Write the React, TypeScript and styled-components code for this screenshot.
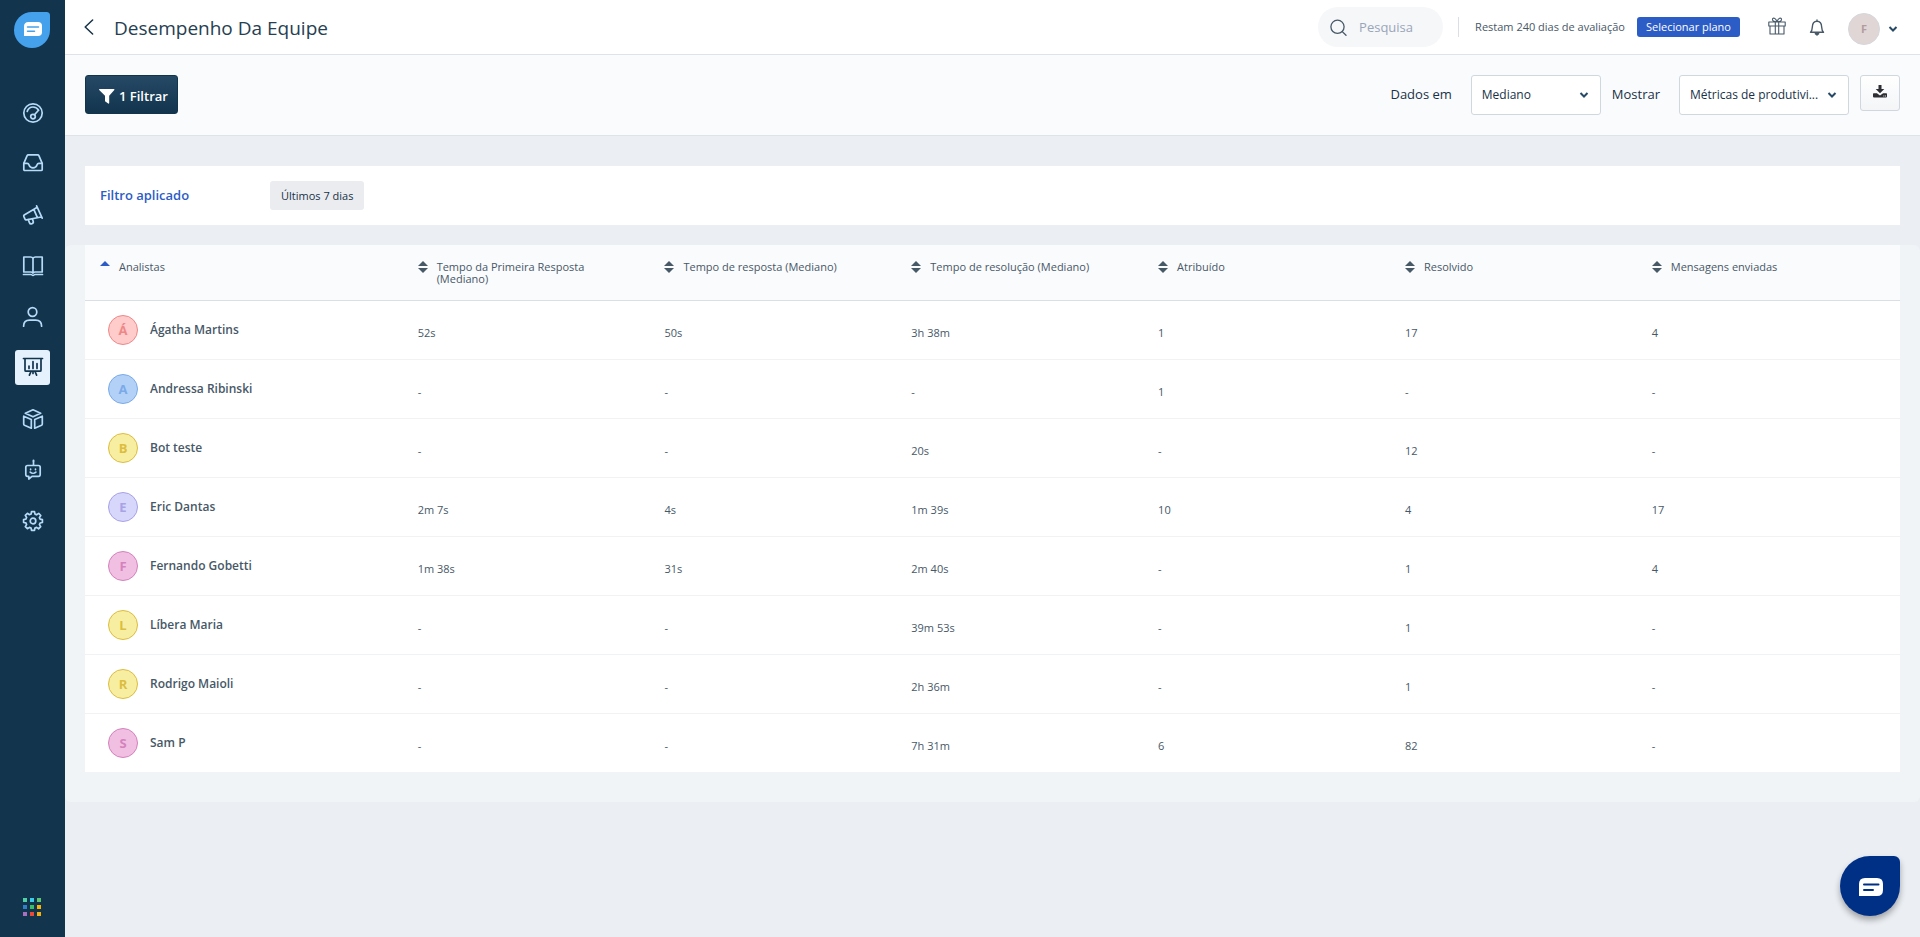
import React from "react";
import styled, { createGlobalStyle, css } from "styled-components";

const GlobalStyle = createGlobalStyle`
  *, *::before, *::after { box-sizing: border-box; }
  html, body, #root { height: 100%; }
  body {
    margin: 0;
    background: #ebeef3;
    color: #183247;
    font-family: "Segoe UI", "Open Sans", "Noto Sans", sans-serif;
    font-size: 12px;
    line-height: 16px;
  }
  button, input, select { font: inherit; color: inherit; margin: 0; }
  button { cursor: pointer; }
`;

/* ---------- layout ---------- */

const Shell = styled.div`
  display: flex;
  min-height: 100%;
`;

const Sidebar = styled.nav`
  flex: 0 0 65px;
  display: flex;
  flex-direction: column;
  align-items: center;
  padding: 12px 2px 21px 0;
  background: #12344d;
  color: #b6daf7;
`;

const LogoLink = styled.a`
  display: flex;
  width: 36px;
  height: 36px;
`;

const NavList = styled.ul`
  flex: 1;
  display: flex;
  flex-direction: column;
  gap: 16px;
  margin: 0;
  padding: 47px 0 0 2px;
  list-style: none;
`;

const NavLink = styled.a<{ $active?: boolean }>`
  display: flex;
  align-items: center;
  justify-content: center;
  width: 35px;
  height: 35px;
  border-radius: 3px;
  color: inherit;
  ${(p) => p.$active && css`
    background: #e5f2fd;
    color: #12344d;
  `}
`;

const BareButton = styled.button`
  display: flex;
  align-items: center;
  justify-content: center;
  padding: 0;
  border: 0;
  background: none;
`;

const Page = styled.div`
  flex: 1;
  min-width: 0;
`;

/* ---------- top bar ---------- */

const TopBar = styled.header`
  display: flex;
  align-items: center;
  height: 55px;
  padding: 0 22px 0 19px;
  background: #fff;
  border-bottom: 1px solid #dfe2e7;
`;

const Title = styled.h1`
  flex: 1;
  margin: 0 0 0 20px;
  padding-top: 2px;
  font-size: 19px;
  font-weight: 400;
  line-height: 28px;
  color: #264052;
`;

const SearchBox = styled.label`
  display: flex;
  align-items: center;
  gap: 12px;
  width: 125px;
  height: 40px;
  padding: 0 12px;
  border-radius: 20px;
  background: #f5f7f9;
  color: #475867;
`;

const SearchInput = styled.input`
  min-width: 0;
  width: 100%;
  padding: 0;
  border: 0;
  outline: 0;
  background: none;
  font-size: 13px;
  &::placeholder { color: #9aa5b8; opacity: 1; }
`;

const Trial = styled.div`
  display: flex;
  align-items: center;
  gap: 12px;
  height: 20px;
  margin-left: 15px;
  padding-left: 16px;
  border-left: 1px solid #dadfe6;
  font-size: 11px;
  color: #475867;
`;

const PlanButton = styled.button`
  height: 20px;
  padding: 0 9px;
  border: 0;
  border-radius: 3px;
  background: #2c5cc5;
  color: #fff;
  font-size: 11px;
  line-height: 20px;
`;

const HeaderIcons = styled.div`
  display: flex;
  align-items: center;
  gap: 23px;
  margin-left: 28px;
  color: #475867;
`;

const ProfileButton = styled(BareButton)`
  gap: 8px;
  padding-top: 3px;
  color: #264966;
`;

const ProfileAvatar = styled.span`
  width: 32px;
  height: 32px;
  border: 1px solid #d6d6dc;
  border-radius: 50%;
  background: #e0d6d6;
  color: #b39c9f;
  font-size: 11px;
  font-weight: 700;
  line-height: 30px;
  text-align: center;
`;

/* ---------- toolbar ---------- */

const Toolbar = styled.div`
  display: flex;
  justify-content: space-between;
  height: 81px;
  padding: 20px;
  background: #fafbfd;
  border-bottom: 1px solid #dfe2e7;
`;

const FilterButton = styled.button`
  display: flex;
  align-items: center;
  gap: 4px;
  height: 39px;
  padding: 3px 9px 0 13px;
  border: 1px solid #12344d;
  border-radius: 3px;
  background: linear-gradient(180deg, #264966, #12344d);
  color: #fff;
  font-size: 13px;
  font-weight: 600;
`;

const Options = styled.div`
  display: flex;
  align-items: flex-start;
`;

const OptionLabel = styled.label`
  margin-left: 11px;
  line-height: 39px;
  font-size: 13px;
`;

const SelectFrame = styled.span<{ $width: number }>`
  display: grid;
  align-items: center;
  width: ${(p) => p.$width}px;
  height: 40px;
  margin-left: 19px;
  border: 1px solid #cfd7df;
  border-radius: 3px;
  background: #fff;
  > * { grid-area: 1 / 1; }
  > svg { justify-self: end; margin-right: 11px; pointer-events: none; }
`;

const Select = styled.select`
  width: 100%;
  height: 38px;
  padding: 0 24px 0 10px;
  border: 0;
  background: none;
  appearance: none;
  font-size: 12px;
`;

const DownloadButton = styled.button`
  display: flex;
  align-items: center;
  justify-content: center;
  width: 40px;
  height: 36px;
  margin-left: 11px;
  padding: 0 0 4px;
  border: 1px solid #cfd7df;
  border-radius: 3px;
  background: linear-gradient(180deg, #fff, #f3f5f7);
  color: #2d2f33;
`;

/* ---------- applied filter ---------- */

const AppliedFilter = styled.section`
  display: flex;
  align-items: center;
  height: 59px;
  margin: 30px 20px 20px;
  padding: 0 15px;
  background: #fff;
`;

const AppliedTitle = styled.h2`
  flex: 0 0 170px;
  margin: 0;
  padding-bottom: 2px;
  font-size: 13px;
  font-weight: 600;
  color: #2c5cc5;
`;

const Chip = styled.span`
  height: 29px;
  padding: 0 11px;
  border-radius: 3px;
  background: #ebecf0;
  font-size: 11px;
  line-height: 29px;
`;

/* ---------- table ---------- */

const TablePanel = styled.section`
  padding: 0 20px 30px;
  border-radius: 6px;
  background: #f0f4f7;
`;

const Table = styled.table`
  width: 100%;
  table-layout: fixed;
  border-collapse: separate;
  border-spacing: 0;
  background: #fff;
  color: #475867;
`;

const FirstCol = styled.col`width: 17.5%;`;
const MetricCol = styled.col`width: 13.6%;`;

const HeadCell = styled.th`
  height: 56px;
  padding: 16px 15px 0;
  border-bottom: 1px solid #dadfe6;
  background: #fafbfd;
  font-weight: 400;
  text-align: left;
  vertical-align: top;
`;

const SortButton = styled.button<{ $active?: boolean }>`
  display: flex;
  align-items: flex-start;
  gap: 9px;
  max-width: 200px;
  padding: 0;
  border: 0;
  background: none;
  font-size: 11px;
  line-height: 12px;
  text-align: left;
  > svg { flex: none; color: ${(p) => (p.$active ? "#2c5cc5" : "#475867")}; }
`;

const BodyRow = styled.tr`
  height: 59px;
  > * { border-bottom: 1px solid #f0f2f4; }
  &:last-child { height: 58px; }
  &:last-child > * { border-bottom: 0; }
`;

const NameCell = styled.th`
  padding: 0 15px 0 23px;
  font-weight: 600;
  text-align: left;
`;

const Person = styled.span`
  display: flex;
  align-items: center;
  gap: 12px;
`;

const Avatar = styled.span<{ $tone: Tone }>`
  width: 30px;
  height: 30px;
  border: 1px solid ${(p) => TONES[p.$tone].line};
  border-radius: 50%;
  background: ${(p) => TONES[p.$tone].fill};
  color: ${(p) => TONES[p.$tone].line};
  font-size: 13px;
  font-weight: 700;
  line-height: 28px;
  text-align: center;
`;

const ValueCell = styled.td`
  padding: 5px 15px 0;
  font-size: 11px;
`;

const ChatButton = styled.button`
  position: fixed;
  right: 20px;
  bottom: 21px;
  display: flex;
  align-items: center;
  justify-content: center;
  width: 60px;
  height: 60px;
  padding: 2px 0 0 2px;
  border: 0;
  border-radius: 30px 6px 30px 30px;
  background: #002f86;
  box-shadow: 0 4px 6px rgba(0, 0, 0, 0.32);
`;

/* ---------- icons ---------- */

const line = { fill: "none", stroke: "currentColor", strokeLinecap: "round", strokeLinejoin: "round" } as const;

const NavIcon = ({ children }: { children: React.ReactNode }) => (
  <svg width="22" height="22" viewBox="0 0 22 22" {...line} strokeWidth="1.7" aria-hidden="true">{children}</svg>
);

const GaugeIcon = () => (
  <NavIcon>
    <circle cx="11" cy="11" r="9.2" />
    <path d="M5.2 9.4C6.2 6.5 8.4 5 11 5c2.400 0 4.400 1.200 5.500 3.200" />
    <circle cx="11" cy="14.600" r="2.300" />
    <path d="M12.500 12.800l4-4.500" />
  </NavIcon>
);
const InboxIcon = () => (
  <NavIcon>
    <path d="M1.800 10.300L5 2.800Q5.400 1.900 6.400 1.900h9.200q1 0 1.400.9l3.200 7.500v6.200q0 1-1 1H2.800q-1 0-1-1z" />
    <path d="M1.800 10.300h3.400c1.400 0 1.500.8 1.900 1.900.6 1.600 2 2.600 3.900 2.600s3.300-1 3.900-2.600c.4-1.100.5-1.900 1.900-1.900h3.400" />
  </NavIcon>
);
const MegaphoneIcon = () => (
  <NavIcon>
    <path d="M14.600 1.800l5.600 12.400M14.900 3.500L2.200 11c-.5.400-.6.900-.4 1.400l1.300 2.900c.2.500.7.700 1.200.6l14.900-2.900M11.800 5.400l3.600 8.200" />
    <path d="M6.300 15.700l1.100 2.900c.4 1.100 1.400 1.500 2.500 1.100 1.100-.4 1.700-1.300 1.300-2.400l-.9-2.400" />
  </NavIcon>
);
const BookIcon = () => (
  <NavIcon>
    <path d="M11 3.200C10.400 2.200 9.600 2 8.600 2H1.800v15h7c1 0 1.800.2 2.200 1 .4-.8 1.200-1 2.200-1h7V2h-6.800c-1 0-1.800.2-2.400 1.200zM11 3.200V18M1.500 19.500h7.700c.8 0 .9 1 1.800 1s1-1 1.800-1h7.700" />
  </NavIcon>
);
const UserIcon = () => (
  <NavIcon>
    <circle cx="10.500" cy="6" r="4.300" />
    <path d="M1.600 20.200c0-4.200 2.500-6 6-6h6c3.500 0 6 1.800 6 6" />
  </NavIcon>
);
const ReportIcon = () => (
  <NavIcon>
    <path d="M1.500 1.500h19M3 1.500v11.700q0 1 1 1h14q1 0 1-1V1.500M9 14.500l-1.600 3.700M13 14.500l1.600 3.700M11 15v1.500" />
    <path d="M7 11.500v-2.500M11 11.500V4.500M15 11.500V6.500" />
  </NavIcon>
);
const BoxesIcon = () => (
  <NavIcon>
    <path d="M11 1.800l7.700 3.500L11 8.800 3.300 5.300z" />
    <path d="M1.700 8.200l7.600 3.300v8.700l-6.800-3q-.8-.4-.8-1.300zM20.300 8.200l-7.600 3.300v8.700l6.800-3q.8-.4.8-1.300z" />
  </NavIcon>
);
const BotIcon = () => (
  <NavIcon>
    <path d="M5.500 6.500h11q1.700 0 1.700 1.700v7.400q0 1.700-1.700 1.700H10l-3.200 2.700v-2.700H5.500q-1.700 0-1.700-1.700V8.200q0-1.700 1.700-1.700zM11.500 6.500V2.500" />
    <path d="M11.500 1.600v.4" strokeWidth="2" />
    <path d="M8.600 10.200v.4M13.500 10.200v.4M8.200 13.200c1.500 1.400 4.200 1.400 5.700 0" />
  </NavIcon>
);
const GearIcon = () => (
  <NavIcon>
    <circle cx="11" cy="11" r="2.800" />
    <path d="M9.500 1.700h3l.5 2.400 1.600.7 2.100-1.400 2.100 2.100-1.400 2.100.7 1.600 2.300.4v2.900l-2.300.5-.7 1.600 1.300 2.100-2.100 2.100-2-1.400-1.700.7-.4 2.300h-3l-.4-2.300-1.700-.7-2 1.300-2.100-2.100 1.300-2-.7-1.700-2.300-.4v-3l2.300-.4.7-1.600-1.300-2.100 2.100-2.100 2 1.400 1.700-.7z" />
  </NavIcon>
);

const Logo = () => (
  <svg width="36" height="36" viewBox="0 0 36 36" aria-hidden="true">
    <path d="M18 0h14.500Q36 0 36 3.500V18A18 18 0 1 1 18 0z" fill="#45a1ec" />
    <path d="M14.500 10H24q4 0 4 4v6q0 4-4 4H10v-9.500q0-4.500 4.500-4.500z" fill="#fff" />
    <path d="M13.500 15h11M13.500 19.300h7" stroke="#45a1ec" strokeWidth="1.500" strokeLinecap="round" />
  </svg>
);

const APP_COLOURS = ["#4fd1a5", "#3ecbe8", "#5cc773", "#2f80c8", "#35c163", "#f8b500", "#ab6fc0", "#e84b3c", "#f5b012"];
const AppsIcon = () => (
  <svg width="18" height="18" viewBox="0 0 18 18" aria-hidden="true">
    {APP_COLOURS.map((c, i) => (
      <rect key={c} x={(i % 3) * 7} y={Math.floor(i / 3) * 7} width="4" height="4" fill={c} />
    ))}
  </svg>
);

const BackIcon = () => (
  <svg width="10" height="16" viewBox="0 0 10 16" {...line} strokeWidth="1.500" aria-hidden="true"><path d="M8.600 1L1.200 8l7.400 7" /></svg>
);
const SearchGlyph = styled.svg`
  flex: none;
`;
const SearchIcon = () => (
  <SearchGlyph width="17" height="17" viewBox="0 0 17 17" {...line} strokeWidth="1.300" aria-hidden="true">
    <circle cx="7.500" cy="7.800" r="6.600" /><path d="M12.300 12.600l3.700 3.600" />
  </SearchGlyph>
);
const GiftIcon = () => (
  <svg width="18" height="20" viewBox="0 0 18 20" {...line} strokeWidth="1.100" aria-hidden="true">
    <path d="M.8 5h16.400v4H.8zM2 9h14v8H2zM7.300 5v12M10.700 5v12M8.600 4.800C5.500 4.600 4.200 3.600 4.500 2.200 4.800.6 7.800.4 8.800 4.500M9.400 4.800c3.100-.2 4.400-1.200 4.100-2.600C13.200.6 10.200.4 9.200 4.500" />
  </svg>
);
const BellIcon = () => (
  <svg width="16" height="18" viewBox="0 0 16 18" {...line} strokeWidth="1.400" aria-hidden="true">
    <path d="M1.500 14.200c1.500-1.200 1.700-2.700 1.800-5C3.400 5.500 5 3.300 8 3.300s4.600 2.200 4.700 5.900c.1 2.300.3 3.800 1.800 5zM8 3.200V2" />
    <path d="M6.300 15.600h3.400L8 17z" fill="currentColor" />
  </svg>
);
const Chevron = () => (
  <svg width="10" height="8" viewBox="0 0 10 8" fill="none" stroke="#264966" strokeWidth="2" aria-hidden="true"><path d="M1.500 2L5 5.500 8.500 2" /></svg>
);
const FunnelIcon = () => (
  <svg width="16" height="15" viewBox="0 0 16 15" fill="currentColor" aria-hidden="true">
    <path d="M.6 0h14.300q.8.400.4 1.100L10.200 6.700v7.400q-.3.800-1 .4L6 12.200V6.700L.2 1.100Q-.2.400.6 0z" />
  </svg>
);
const DownloadIcon = () => (
  <svg width="14" height="13" viewBox="0 0 14 13" fill="currentColor" aria-hidden="true">
    <path d="M5.500 0h3v4h2.800L7 8.300 2.700 4h2.800z" />
    <path d="M.7 8.300h3.200L7 10.600l3.100-2.300h3.200q.7 0 .7.700v2.600q0 .8-.7.800H.7q-.7 0-.7-.8V9q0-.7.7-.7zM10.400 10.600v.9h.9v-.9zm1.600 0v.9h.9v-.9z" fillRule="evenodd" />
  </svg>
);
const SortIcon = ({ active }: { active?: boolean }) => (
  <svg width="10" height="12" viewBox="0 0 10 12" fill="currentColor" aria-hidden="true">
    <path d="M5 0l5 5H0z" />
    {!active && <path d="M5 12l5-5H0z" />}
  </svg>
);
const ChatIcon = () => (
  <svg width="24" height="18" viewBox="0 0 24 18" aria-hidden="true">
    <path d="M6 0h12q6 0 6 6v6q0 6-6 6H0V6q0-6 6-6z" fill="#fff" />
    <path d="M5 6.500h14.500M5 12h9" stroke="#002f86" strokeWidth="2" strokeLinecap="round" />
  </svg>
);

/* ---------- data ---------- */

const TONES = {
  red: { fill: "#ffcbcb", line: "#ee8888" },
  blue: { fill: "#b3d1f7", line: "#7aaae8" },
  yellow: { fill: "#f7eea1", line: "#dcbd3f" },
  violet: { fill: "#d7d6fb", line: "#a8a2e6" },
  pink: { fill: "#f1bfe1", line: "#d482bd" },
};
type Tone = keyof typeof TONES;

const NAV = [
  { label: "Painel", Icon: GaugeIcon },
  { label: "Caixa de entrada", Icon: InboxIcon },
  { label: "Campanhas", Icon: MegaphoneIcon },
  { label: "Perguntas frequentes", Icon: BookIcon },
  { label: "Contatos", Icon: UserIcon },
  { label: "Relatórios", Icon: ReportIcon, active: true },
  { label: "Aplicativos", Icon: BoxesIcon },
  { label: "Bots", Icon: BotIcon },
  { label: "Configurações", Icon: GearIcon },
];

const COLUMNS = [
  "Analistas",
  "Tempo da Primeira Resposta (Mediano)",
  "Tempo de resposta (Mediano)",
  "Tempo de resolução (Mediano)",
  "Atribuído",
  "Resolvido",
  "Mensagens enviadas",
];

const AGENTS: { name: string; tone: Tone; values: string[] }[] = [
  { name: "Ágatha Martins", tone: "red", values: ["52s", "50s", "3h 38m", "1", "17", "4"] },
  { name: "Andressa Ribinski", tone: "blue", values: ["-", "-", "-", "1", "-", "-"] },
  { name: "Bot teste", tone: "yellow", values: ["-", "-", "20s", "-", "12", "-"] },
  { name: "Eric Dantas", tone: "violet", values: ["2m 7s", "4s", "1m 39s", "10", "4", "17"] },
  { name: "Fernando Gobetti", tone: "pink", values: ["1m 38s", "31s", "2m 40s", "-", "1", "4"] },
  { name: "Líbera Maria", tone: "yellow", values: ["-", "-", "39m 53s", "-", "1", "-"] },
  { name: "Rodrigo Maioli", tone: "yellow", values: ["-", "-", "2h 36m", "-", "1", "-"] },
  { name: "Sam P", tone: "pink", values: ["-", "-", "7h 31m", "6", "82", "-"] },
];

export default function App() {
  return (
    <Shell>
      <GlobalStyle />
      <Sidebar aria-label="Principal">
        <LogoLink href="#" aria-label="Início"><Logo /></LogoLink>
        <NavList>
          {NAV.map(({ label, Icon, active }) => (
            <li key={label}>
              <NavLink href="#" $active={active} aria-label={label} aria-current={active ? "page" : undefined}><Icon /></NavLink>
            </li>
          ))}
        </NavList>
        <BareButton aria-label="Trocar de produto"><AppsIcon /></BareButton>
      </Sidebar>

      <Page>
        <TopBar>
          <BareButton aria-label="Voltar"><BackIcon /></BareButton>
          <Title>Desempenho Da Equipe</Title>
          <SearchBox>
            <SearchIcon />
            <SearchInput type="search" placeholder="Pesquisa" aria-label="Pesquisa" />
          </SearchBox>
          <Trial>
            <span>Restam 240 dias de avaliação</span>
            <PlanButton>Selecionar plano</PlanButton>
          </Trial>
          <HeaderIcons>
            <BareButton aria-label="Novidades"><GiftIcon /></BareButton>
            <BareButton aria-label="Notificações"><BellIcon /></BareButton>
            <ProfileButton aria-label="Perfil">
              <ProfileAvatar>F</ProfileAvatar>
              <Chevron />
            </ProfileButton>
          </HeaderIcons>
        </TopBar>

        <Toolbar>
          <FilterButton><FunnelIcon />1 Filtrar</FilterButton>
          <Options>
            <OptionLabel htmlFor="aggregate">Dados em</OptionLabel>
            <SelectFrame $width={130}>
              <Select id="aggregate"><option>Mediano</option></Select>
              <Chevron />
            </SelectFrame>
            <OptionLabel htmlFor="metrics">Mostrar</OptionLabel>
            <SelectFrame $width={170}>
              <Select id="metrics"><option>Métricas de produtivi...</option></Select>
              <Chevron />
            </SelectFrame>
            <DownloadButton aria-label="Baixar"><DownloadIcon /></DownloadButton>
          </Options>
        </Toolbar>

        <main>
          <AppliedFilter>
            <AppliedTitle>Filtro aplicado</AppliedTitle>
            <Chip>Últimos 7 dias</Chip>
          </AppliedFilter>

          <TablePanel>
            <Table>
              <colgroup>
                <FirstCol />
                {COLUMNS.slice(2).map((c) => <MetricCol key={c} />)}
                <col />
              </colgroup>
              <thead>
                <tr>
                  {COLUMNS.map((label, i) => (
                    <HeadCell key={label} scope="col" aria-sort={i === 0 ? "ascending" : undefined}>
                      <SortButton $active={i === 0}><SortIcon active={i === 0} /><span>{label}</span></SortButton>
                    </HeadCell>
                  ))}
                </tr>
              </thead>
              <tbody>
                {AGENTS.map((a) => (
                  <BodyRow key={a.name}>
                    <NameCell scope="row">
                      <Person><Avatar $tone={a.tone} aria-hidden="true">{a.name[0]}</Avatar>{a.name}</Person>
                    </NameCell>
                    {a.values.map((v, i) => <ValueCell key={COLUMNS[i + 1]}>{v}</ValueCell>)}
                  </BodyRow>
                ))}
              </tbody>
            </Table>
          </TablePanel>
        </main>
      </Page>

      <ChatButton aria-label="Abrir conversa"><ChatIcon /></ChatButton>
    </Shell>
  );
}
